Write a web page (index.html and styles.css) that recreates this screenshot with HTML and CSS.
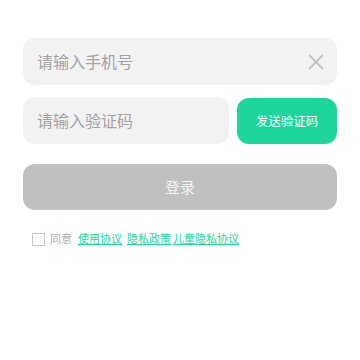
FILE: index.html
```html
<!DOCTYPE html>
<html lang="zh">
<head>
  <meta charset="UTF-8">
  <meta name="viewport" content="width=device-width, initial-scale=1.0">
  <title>登录</title>
  <link rel="stylesheet" href="styles.css">
</head>
<body>
  <div class="container">
    <div class="field">
      <span class="placeholder">请输入手机号</span>
      <svg class="clear" width="18" height="18" viewBox="0 0 18 18">
        <path d="M2 2 L16 16 M16 2 L2 16" stroke="#c4c4c4" stroke-width="2" fill="none"/>
      </svg>
    </div>
    <div class="code-row">
      <div class="field code">
        <span class="placeholder">请输入验证码</span>
      </div>
      <button class="send-btn">发送验证码</button>
    </div>
    <button class="login-btn">登录</button>
    <div class="agree">
      <span class="checkbox"></span>
      <span class="agree-text">同意</span>
      <a class="link" href="#">使用协议</a>
      <a class="link" href="#">隐私政策</a>
      <a class="link tight" href="#">儿童隐私协议</a>
    </div>
  </div>
</body>
</html>
```

FILE: styles.css
```css
body {
  margin: 0;
  background: #fff;
  font-family: "Noto Sans CJK SC", "Noto Sans", sans-serif;
}

.container {
  padding: 38px 23px 0 23px;
}

.field {
  height: 47px;
  background: #f2f2f2;
  border-radius: 12px;
  display: flex;
  align-items: center;
  justify-content: space-between;
  padding: 0 12px 2px 14px;
  box-sizing: border-box;
}

.placeholder {
  font-size: 16px;
  color: #a3a3a3;
}

.clear {
  margin-top: 2px;
}

.code-row {
  display: flex;
  gap: 8px;
  margin-top: 12px;
}

.field.code {
  flex: 1;
}

.send-btn {
  width: 100px;
  height: 46px;
  margin-top: 1px;
  padding-bottom: 2px;
  border: none;
  border-radius: 12px;
  background: #1dd69c;
  color: #fff;
  font-family: inherit;
  font-size: 12.5px;
}

.login-btn {
  display: block;
  width: 100%;
  height: 46px;
  margin-top: 20px;
  padding-bottom: 2px;
  border: none;
  border-radius: 12px;
  background: #c0c0c0;
  color: #f4f4f4;
  font-family: inherit;
  font-size: 15px;
}

.agree {
  display: flex;
  align-items: center;
  margin-top: 20px;
  padding-left: 9px;
  font-size: 11px;
}

.checkbox {
  width: 11px;
  height: 11px;
  border: 1.5px solid #c8c8c8;
  margin-right: 5px;
  margin-top: 2px;
}

.agree-text {
  color: #b0b0b0;
  margin-right: 6px;
}

.link {
  color: #1dd69c;
  text-decoration: underline;
  margin-right: 5px;
}

.link.tight {
  margin-left: -3px;
}
```
